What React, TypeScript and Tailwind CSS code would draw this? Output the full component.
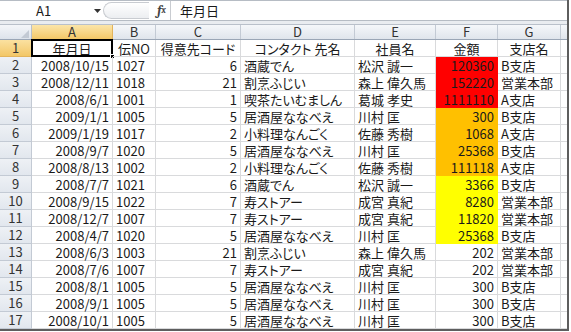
import clsx from "clsx";

type Fill = "red" | "orange" | "yellow" | undefined;
type Row = [string, string, string, string, string, string, string, Fill?];

const FONT = { fontFamily: "'Noto Sans CJK JP', 'Noto Sans', sans-serif", fontFeatureSettings: '"palt"' };

const COLS = [
  { key: "A", w: "w-[81px]", align: "justify-end" },
  { key: "B", w: "w-[43px]", align: "justify-start" },
  { key: "C", w: "w-[85px]", align: "justify-end" },
  { key: "D", w: "w-[114px]", align: "justify-start" },
  { key: "E", w: "w-[81px]", align: "justify-start" },
  { key: "F", w: "w-[62px]", align: "justify-end" },
  { key: "G", w: "w-[63px]", align: "justify-start" },
];

const HEAD = ["年月日", "伝NO", "得意先コード", "コンタクト 先名", "社員名", "金額", "支店名"];

const ROWS: Row[] = [
  ["2008/10/15", "1027", "6", "酒蔵でん", "松沢 誠一", "120360", "B支店", "red"],
  ["2008/12/11", "1018", "21", "割烹ふじい", "森上 偉久馬", "152220", "営業本部", "red"],
  ["2008/6/1", "1001", "1", "喫茶たいむましん", "葛城 孝史", "1111110", "A支店", "red"],
  ["2009/1/1", "1005", "5", "居酒屋ななべえ", "川村 匡", "300", "B支店", "orange"],
  ["2009/1/19", "1017", "2", "小料理なんごく", "佐藤 秀樹", "1068", "A支店", "orange"],
  ["2008/9/7", "1020", "5", "居酒屋ななべえ", "川村 匡", "25368", "B支店", "orange"],
  ["2008/8/13", "1002", "2", "小料理なんごく", "佐藤 秀樹", "111118", "A支店", "orange"],
  ["2008/7/7", "1021", "6", "酒蔵でん", "松沢 誠一", "3366", "B支店", "yellow"],
  ["2008/9/15", "1022", "7", "寿ストアー", "成宮 真紀", "8280", "営業本部", "yellow"],
  ["2008/12/7", "1007", "7", "寿ストアー", "成宮 真紀", "11820", "営業本部", "yellow"],
  ["2008/4/7", "1020", "5", "居酒屋ななべえ", "川村 匡", "25368", "B支店", "yellow"],
  ["2008/6/3", "1003", "21", "割烹ふじい", "森上 偉久馬", "202", "営業本部"],
  ["2008/7/6", "1007", "7", "寿ストアー", "成宮 真紀", "202", "営業本部"],
  ["2008/8/1", "1005", "5", "居酒屋ななべえ", "川村 匡", "300", "B支店"],
  ["2008/9/1", "1005", "5", "居酒屋ななべえ", "川村 匡", "300", "B支店"],
  ["2008/10/1", "1005", "5", "居酒屋ななべえ", "川村 匡", "300", "B支店"],
];

const FILL: Record<string, string> = {
  red: "bg-[#ff0000] border-[#ff0000]",
  orange: "bg-[#ffc000] border-[#ffc000]",
  yellow: "bg-[#ffff00] border-[#ffff00]",
};

function FormulaBar() {
  return (
    <div className="flex h-[21px] border-t border-b border-[#b6bcc4] bg-white">
      <div className="relative flex w-[103px] items-center pl-[36px] text-[13px] text-[#1a1a1a]">
        A1
        <svg className="absolute left-[94px] top-[8px]" width="7" height="4" viewBox="0 0 7 4">
          <path d="M0 0h7L3.5 4z" fill="#333" />
        </svg>
      </div>
      <div className="flex w-[50px] items-center">
        <div className="h-[17px] w-[46px] rounded-l-full border border-r-0 border-[#c9ccd1] bg-gradient-to-b from-[#ffffff] to-[#eceef1]" />
      </div>
      <div className="flex w-[18px] items-center justify-center border-r border-[#c9ccd1] font-serif text-[13px] font-bold italic text-[#444]">
        f<span className="text-[9px]">x</span>
      </div>
      <div className="flex flex-1 items-center pl-[9px] text-[13px] text-[#1a1a1a]">年月日</div>
    </div>
  );
}

function ColumnHeaders() {
  return (
    <div className="flex h-[16px] border-t border-[#b9c0ca] border-b border-b-[#9aa6b6] text-[13px] leading-none text-[#333]">
      <div className="flex w-[32px] items-end justify-end border-r border-[#b9c0ca] bg-gradient-to-b from-[#f4f6f9] to-[#dde3eb] pb-[1px] pr-[2px]">
        <svg width="8" height="8" viewBox="0 0 8 8">
          <path d="M8 0v8H0z" fill="#c3cad4" />
        </svg>
      </div>
      {COLS.map((c) => (
        <div
          key={c.key}
          className={clsx(
            "flex items-center justify-center border-r",
            c.w,
            c.key === "A"
              ? "border-[#e3b45b] bg-gradient-to-b from-[#fbe5a8] to-[#f3c766]"
              : "border-[#c3cad4] bg-gradient-to-b from-[#f5f7fa] to-[#e0e5ec]",
          )}
        >
          {c.key}
        </div>
      ))}
      <div className="flex-1 bg-gradient-to-b from-[#f5f7fa] to-[#e0e5ec]" />
    </div>
  );
}

function SheetRow({ n, cells, fill, head }: { n: number; cells: string[]; fill?: Fill; head?: boolean }) {
  return (
    <div className="flex h-[17.4px] text-[13px] leading-none text-[#1a1a1a]">
      <div
        className={clsx(
          "flex w-[32px] shrink-0 items-center justify-center border-r border-b text-[#333]",
          head
            ? "border-[#e3b45b] bg-gradient-to-b from-[#fbe1a0] to-[#f3c766]"
            : "border-[#c3cad4] bg-gradient-to-b from-[#eef1f5] to-[#e2e7ee]",
        )}
      >
        {n}
      </div>
      {COLS.map((c, i) => {
        const filled = c.key === "F" && fill;
        return (
          <div
            key={c.key}
            className={clsx(
              "relative flex shrink-0 items-center whitespace-nowrap border-r border-b px-[3px] pt-[1px]",
              c.w,
              head ? "justify-center" : c.align,
              filled ? FILL[fill] : "border-[#d9dadc]",
            )}
          >
            {cells[i]}
            {head && c.key === "A" && (
              <>
                <div className="absolute -left-[1px] -top-[1px] -right-[1px] -bottom-[1px] border-2 border-black" />
                <div className="absolute -bottom-[3px] -right-[3px] h-[5px] w-[5px] border border-white bg-black" />
              </>
            )}
          </div>
        );
      })}
      <div className="flex-1 border-b border-[#d9dadc]" />
    </div>
  );
}

export default function App() {
  return (
    <div className="h-[332px] w-[571px] overflow-hidden bg-white" style={FONT}>
      <div className="flex h-[331px] w-[569px] flex-col overflow-hidden border-r-2 border-b-2 border-[#5e5e5e]">
        <FormulaBar />
        <div className="h-[3px] bg-[#e9ecf0]" />
        <ColumnHeaders />
        <SheetRow n={1} cells={HEAD} head />
        {ROWS.map((r, i) => (
          <SheetRow key={i} n={i + 2} cells={r.slice(0, 7) as string[]} fill={r[7]} />
        ))}
      </div>
    </div>
  );
}
